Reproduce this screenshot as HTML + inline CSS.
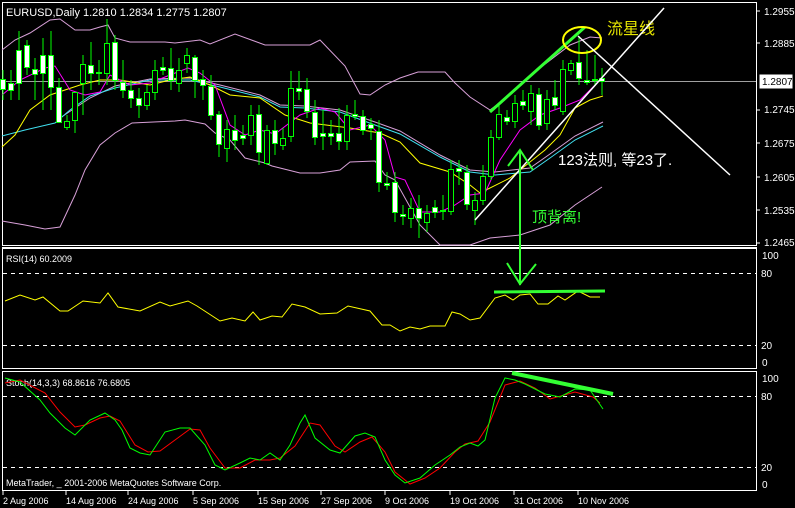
<!DOCTYPE html>
<html><head><meta charset="utf-8"><style>
html,body{margin:0;padding:0;background:#000;width:795px;height:508px;overflow:hidden}
svg{display:block}
text{font-family:"Liberation Sans","Noto Sans CJK SC",sans-serif}
</style></head><body>
<svg width="795" height="508" viewBox="0 0 795 508" xmlns="http://www.w3.org/2000/svg">
<rect width="795" height="508" fill="#000"/>
<!-- panels -->
<g fill="none" stroke="#fff" stroke-width="1">
<rect x="2.5" y="2.5" width="754" height="243"/>
<line x1="2" y1="247.5" x2="757" y2="247.5"/>
<rect x="2.5" y="248.5" width="754" height="120"/>
<rect x="2.5" y="371.5" width="754" height="119"/>
</g>
<g stroke="#fff" stroke-dasharray="4,4" stroke-width="1">
<line x1="3" y1="273.5" x2="756" y2="273.5"/>
<line x1="3" y1="345.5" x2="756" y2="345.5"/>
<line x1="3" y1="396.5" x2="756" y2="396.5"/>
<line x1="3" y1="467.5" x2="756" y2="467.5"/>
</g>
<line x1="3" y1="81.5" x2="756" y2="81.5" stroke="#a0a0a0"/>
<!-- bands -->
<g fill="none" stroke-width="1">
<polyline stroke="#d8a0d8" points="2,50 15,40 30,33 50,20 60,19 75,30 90,30 100,27 108,25 115,38 130,42 165,42 175,43 200,40 210,44 235,34 265,45 310,45 320,40 345,66 360,94 370,95 385,85 400,78 418,72 445,72 455,83 470,97 490,110 510,95 540,68 570,45 590,37 602,38"/>
<polyline stroke="#d8a0d8" points="2,221 25,225 45,229 60,227 75,195 85,170 100,145 115,133 132,123 175,121 185,120 205,124 215,133 230,140 245,158 265,163 272,166 300,173 320,173 340,170 350,162 375,161 385,175 395,180 420,225 440,245 470,245 490,238 520,235 550,225 575,205 602,187"/>
<polyline stroke="#d8a0d8" points="60,118 90,98 115,86 150,79 190,78 220,85 260,95 280,105 305,106 340,110 375,122 400,131 440,155 470,170 495,172 530,168 550,154 575,136 603,122"/>
<polyline stroke="#40e0f0" points="2,136 25,130 55,123 70,110 90,96 115,88 150,80 190,80 220,87 260,97 280,107 305,108 340,112 375,125 400,134 440,157 470,172 495,175 530,172 550,158 575,140 603,126"/>
<polyline stroke="#ffff00" points="2,147 15,135 30,110 50,95 80,85 100,80 120,80 150,85 170,80 190,77 210,85 230,95 260,98 285,115 310,123 350,128 380,133 400,142 420,163 450,172 470,185 480,193 510,178 545,150 560,135 575,108 590,100 603,96"/>
<polyline stroke="#ff00ff" points="2,95 20,80 45,68 55,66 70,90 85,95 100,92 110,75 130,85 150,83 170,75 188,68 200,73 215,85 230,125 245,135 260,130 275,134 300,115 320,108 335,112 350,130 370,125 385,140 395,177 405,180 420,212 440,212 455,205 470,195 485,193 500,160 520,130 540,115 560,108 580,100 600,80"/>
</g>
<!-- candles -->
<g stroke="#00ff00" stroke-width="1">
<path d="M3,70V100M11,70V100M19,31V100M27,40V75M35,58V100M43,38V110M51,31V110M59,78V122M67,115V130M75,97V133M83,55V115M91,42V90M99,60V85M107,19V85M115,35V90M123,60V98M131,80V108M139,88V118M147,85V110M155,60V100M163,57V75M171,48V90M179,58V92M187,48V73M195,55V98M203,70V100M211,75V120M219,111V157M227,120V162M235,115V150M243,125V145M251,105V145M259,105V165M267,125V165M275,120V155M283,128V150M291,71V142M299,71V100M307,78V118M315,100V145M323,110V150M331,120V145M339,108V150M347,105V150M355,100V120M363,110V135M371,118V140M379,120V192M387,172V190M395,172V222M403,205V225M411,198V228M419,195V238M427,205V232M435,200V218M443,195V220M451,160V215M459,160V185M467,165V210M475,192V225M483,165V205M491,130V180M499,105V140M507,110V125M515,95V128M523,90V110M531,85V125M539,88V130M547,90V130M555,80V110M563,60V115M571,60V75M579,36V85M587,50V85M595,55V85M602,68V95"/>
</g>
<g fill="#fff" stroke="#00ff00" stroke-width="1">
<rect x="0.5" y="79.5" width="5" height="10"/><rect x="8.5" y="83.5" width="5" height="7"/><rect x="16.5" y="50.5" width="5" height="33"/><rect x="24.5" y="45.5" width="5" height="22"/><rect x="32.5" y="69.5" width="5" height="5"/><rect x="40.5" y="55.5" width="5" height="18"/><rect x="48.5" y="55.5" width="5" height="32"/><rect x="56.5" y="87.5" width="5" height="35"/><rect x="64.5" y="121.5" width="5" height="6" fill="#000"/><rect x="72.5" y="92.5" width="5" height="28" fill="#000"/><rect x="80.5" y="64.5" width="5" height="19" fill="#000"/><rect x="88.5" y="65.5" width="5" height="8"/><rect x="96.5" y="72.5" width="5" height="1"/><rect x="104.5" y="43.5" width="5" height="30" fill="#000"/><rect x="112.5" y="42.5" width="5" height="38"/><rect x="120.5" y="82.5" width="5" height="8"/><rect x="128.5" y="90.5" width="5" height="8"/><rect x="136.5" y="98.5" width="5" height="7"/><rect x="144.5" y="92.5" width="5" height="13" fill="#000"/><rect x="152.5" y="70.5" width="5" height="22" fill="#000"/><rect x="160.5" y="67.5" width="5" height="3"/><rect x="168.5" y="68.5" width="5" height="12"/><rect x="176.5" y="70.5" width="5" height="13" fill="#000"/><rect x="184.5" y="55.5" width="5" height="8" fill="#000"/><rect x="192.5" y="57.5" width="5" height="23"/><rect x="200.5" y="79.5" width="5" height="6"/><rect x="208.5" y="86.5" width="5" height="29"/><rect x="216.5" y="114.5" width="5" height="30"/><rect x="224.5" y="129.5" width="5" height="19" fill="#000"/><rect x="232.5" y="130.5" width="5" height="10"/><rect x="240.5" y="135.5" width="5" height="3"/><rect x="248.5" y="115.5" width="5" height="20" fill="#000"/><rect x="256.5" y="114.5" width="5" height="38"/><rect x="264.5" y="130.5" width="5" height="33" fill="#000"/><rect x="272.5" y="130.5" width="5" height="13"/><rect x="280.5" y="138.5" width="5" height="7" fill="#000"/><rect x="288.5" y="88.5" width="5" height="48" fill="#000"/><rect x="296.5" y="88.5" width="5" height="3"/><rect x="304.5" y="89.5" width="5" height="22"/><rect x="312.5" y="112.5" width="5" height="25"/><rect x="320.5" y="133.5" width="5" height="3"/><rect x="328.5" y="133.5" width="5" height="3"/><rect x="336.5" y="133.5" width="5" height="8"/><rect x="344.5" y="115.5" width="5" height="26" fill="#000"/><rect x="352.5" y="114.5" width="5" height="2"/><rect x="360.5" y="116.5" width="5" height="14"/><rect x="368.5" y="124.5" width="5" height="4"/><rect x="376.5" y="131.5" width="5" height="51"/><rect x="384.5" y="183.5" width="5" height="2"/><rect x="392.5" y="182.5" width="5" height="30"/><rect x="400.5" y="214.5" width="5" height="2"/><rect x="408.5" y="208.5" width="5" height="10" fill="#000"/><rect x="416.5" y="208.5" width="5" height="10"/><rect x="424.5" y="213.5" width="5" height="9" fill="#000"/><rect x="432.5" y="207.5" width="5" height="5"/><rect x="440.5" y="210.5" width="5" height="1"/><rect x="448.5" y="169.5" width="5" height="42" fill="#000"/><rect x="456.5" y="168.5" width="5" height="3"/><rect x="464.5" y="172.5" width="5" height="32"/><rect x="472.5" y="200.5" width="5" height="10" fill="#000"/><rect x="480.5" y="176.5" width="5" height="24" fill="#000"/><rect x="488.5" y="137.5" width="5" height="39" fill="#000"/><rect x="496.5" y="114.5" width="5" height="23" fill="#000"/><rect x="504.5" y="117.5" width="5" height="4"/><rect x="512.5" y="103.5" width="5" height="18" fill="#000"/><rect x="520.5" y="101.5" width="5" height="4"/><rect x="528.5" y="93.5" width="5" height="18" fill="#000"/><rect x="536.5" y="94.5" width="5" height="31"/><rect x="544.5" y="99.5" width="5" height="24" fill="#000"/><rect x="552.5" y="97.5" width="5" height="8"/><rect x="560.5" y="69.5" width="5" height="42" fill="#000"/><rect x="568.5" y="63.5" width="5" height="7" fill="#000"/><rect x="576.5" y="62.5" width="5" height="16"/><rect x="584.5" y="80.5" width="5" height="2"/><rect x="592.5" y="79.5" width="5" height="1"/><rect x="599.5" y="78.5" width="5" height="3"/>
</g>
<!-- annotations main -->
<line x1="490" y1="112" x2="585" y2="27" stroke="#33ff33" stroke-width="3"/>
<ellipse cx="582" cy="40" rx="19" ry="13" fill="none" stroke="#ffff00" stroke-width="2"/>
<text x="607" y="34" fill="#e8e800" font-size="16">流星线</text>
<g stroke="#fff" stroke-width="1.5" fill="none">
<line x1="475" y1="220" x2="664" y2="8"/>
<line x1="578" y1="36" x2="730" y2="175"/>
</g>
<g stroke="#33ff33" stroke-width="2" fill="none">
<line x1="520" y1="150" x2="520" y2="285"/>
<polyline points="508,166 520,150 533,170"/>
<polyline points="507,263 520,284 536,264"/>
</g>
<text x="532" y="222" fill="#33ff33" font-size="15">顶背离!</text>
<text x="558" y="165" fill="#fff" font-size="15">123法则, 等23了.</text>
<text x="6" y="16" fill="#fff" font-size="11">EURUSD,Daily  1.2810 1.2834 1.2775 1.2807</text>
<!-- price scale -->
<g fill="#fff" font-size="10">
<text x="764" y="15">1.2955</text><text x="764" y="47">1.2885</text><text x="764" y="113">1.2745</text><text x="764" y="147">1.2675</text><text x="764" y="181">1.2605</text><text x="764" y="214">1.2535</text><text x="764" y="246">1.2465</text>
<text x="762" y="259">100</text><text x="761" y="277">80</text><text x="761" y="349">20</text><text x="762" y="366">0</text>
<text x="762" y="382">100</text><text x="761" y="400">80</text><text x="761" y="471">20</text><text x="762" y="488">0</text>
</g>
<g stroke="#fff"><path d="M757,11h3M757,43h3M757,110h3M757,143h3M757,177h3M757,210h3M757,243h3"/></g>
<rect x="759.5" y="74.5" width="33" height="14" fill="#fff"/>
<text x="762" y="85" fill="#000" font-size="10">1.2807</text>
<!-- RSI -->
<text x="6" y="262" fill="#fff" font-size="9">RSI(14) 60.2009</text>
<polyline fill="none" stroke="#ffff00" points="5,301 20,295 35,300 43,297 60,311 68,311 83,301 100,303 108,293 118,307 140,311 160,302 170,306 188,301 197,306 220,321 232,318 245,321 253,312 260,320 272,316 282,317 292,304 305,307 320,314 337,313 348,306 370,311 382,325 390,325 400,331 410,327 420,329 430,326 445,326 452,312 460,314 470,320 480,318 495,298 505,295 513,300 520,295 530,294 538,304 548,304 558,296 565,300 578,291 590,297 600,297"/>
<line x1="494" y1="292" x2="605" y2="291" stroke="#33ff33" stroke-width="3"/>
<!-- Stoch -->
<text x="6" y="386" fill="#fff" font-size="9">Stoch(14,3,3) 68.8616 76.6805</text>
<polyline fill="none" stroke="#ff0000" points="5,383 20,380 45,393 60,412 75,427 85,425 100,418 110,416 120,421 135,445 148,452 160,451 175,440 190,429 200,430 210,448 225,468 240,468 255,460 270,460 280,458 295,446 310,423 320,425 335,446 345,452 360,442 372,437 385,452 395,472 410,484 425,478 440,468 455,452 465,444 478,441 490,422 505,385 520,381 535,388 550,399 575,392 593,397 600,403"/>
<polyline fill="none" stroke="#00ff00" points="5,378 20,382 40,400 50,413 65,428 75,435 90,420 105,413 115,420 122,430 130,448 140,453 150,455 165,432 180,428 190,428 205,445 215,465 225,470 240,463 250,458 260,460 270,453 280,460 290,445 300,423 305,415 315,438 330,450 340,453 355,436 365,433 375,437 385,460 395,475 405,483 420,478 435,465 450,455 460,447 470,443 478,446 485,440 495,398 505,378 515,380 525,384 545,394 560,397 575,389 590,390 603,409"/>
<line x1="512" y1="373" x2="613" y2="394" stroke="#33ff33" stroke-width="4"/>
<text x="6" y="486" fill="#fff" font-size="9">MetaTrader, _ 2001-2006 MetaQuotes Software Corp.</text>
<!-- dates -->
<g fill="#fff" font-size="9">
<text x="3" y="504">2 Aug 2006</text><text x="66" y="504">14 Aug 2006</text><text x="128" y="504">24 Aug 2006</text><text x="193" y="504">5 Sep 2006</text><text x="258" y="504">15 Sep 2006</text><text x="321" y="504">27 Sep 2006</text><text x="385" y="504">9 Oct 2006</text><text x="450" y="504">19 Oct 2006</text><text x="514" y="504">31 Oct 2006</text><text x="578" y="504">10 Nov 2006</text>
</g>
<g stroke="#fff"><path d="M3,491v4M66,491v4M128,491v4M193,491v4M258,491v4M321,491v4M385,491v4M450,491v4M514,491v4M578,491v4"/></g>
</svg>
</body></html>
